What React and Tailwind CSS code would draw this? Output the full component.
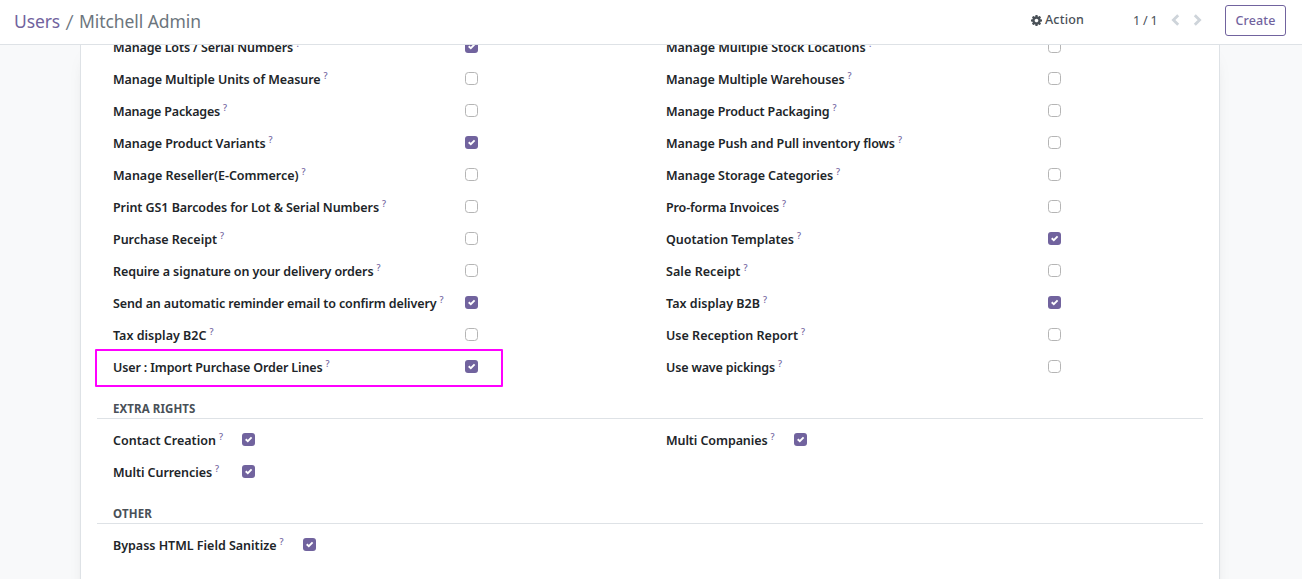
import { useLayoutEffect, useRef } from "react";

const leftColumn = [
  ["Manage Lots / Serial Numbers", 180, true],
  ["Manage Multiple Units of Measure", 207.5, false],
  ["Manage Packages", 107, false],
  ["Manage Product Variants", 152.5, true],
  ["Manage Reseller(E-Commerce)", 185.5, false],
  ["Print GS1 Barcodes for Lot & Serial Numbers", 266, false],
  ["Purchase Receipt", 104, false],
  ["Require a signature on your delivery orders", 260.5, false],
  ["Send an automatic reminder email to confirm delivery", 323.5, true],
  ["Tax display B2C", 93.5, false],
  ["User : Import Purchase Order Lines", 209.5, true],
];

const rightColumn = [
  ["Manage Multiple Stock Locations", 199.5, false],
  ["Manage Multiple Warehouses", 178.5, false],
  ["Manage Product Packaging", 163.5, false],
  ["Manage Push and Pull inventory flows", 229, false],
  ["Manage Storage Categories", 167, false],
  ["Pro-forma Invoices", 113, false],
  ["Quotation Templates", 128, true],
  ["Sale Receipt", 74.5, false],
  ["Tax display B2B", 94, true],
  ["Use Reception Report", 132, false],
  ["Use wave pickings", 109, false],
];

// Spreads the letters so that the text fills exactly the given width.
function FitText({ text, width }) {
  const ref = useRef(null);
  useLayoutEffect(() => {
    const el = ref.current;
    const fit = () => {
      el.style.letterSpacing = "0px";
      const natural = el.getBoundingClientRect().width;
      el.style.letterSpacing = `${(width - natural) / text.length}px`;
    };
    fit();
    document.fonts?.ready.then(fit);
  }, [text, width]);
  return <span ref={ref} className="inline-block whitespace-pre">{text}</span>;
}

function CogIcon() {
  return (
    <svg viewBox="0 128 1536 1536" className="size-[11px]" fill="currentColor">
      <path d="M1024 896q0-106-75-181t-181-75-181 75-75 181 75 181 181 75 181-75 75-181zm512-109v222q0 12-8 23t-20 13l-185 28q-19 54-39 91 35 50 107 138 10 12 10 25t-9 23q-27 37-99 108t-94 71q-12 0-26-9l-138-108q-44 23-91 38-16 136-29 186-7 28-36 28h-222q-14 0-24.500-8.500t-11.500-21.500l-28-184q-49-16-90-37l-141 107q-10 9-25 9-14 0-25-11-126-114-165-168-7-10-7-23 0-12 8-23 15-21 51-66.500t54-70.500q-27-50-41-99l-183-27q-13-2-21-12.500t-8-23.500v-222q0-12 8-23t19-13l186-28q14-46 39-92-40-57-107-138-10-12-10-24 0-10 9-23 26-36 98.500-107.500t94.500-71.500q13 0 26 10l138 107q44-23 91-38 16-136 29-186 7-28 36-28h222q14 0 24.500 8.500t11.500 21.500l28 184q49 16 90 37l142-107q9-9 24-9 13 0 25 10 129 119 165 170 7 8 7 22 0 12-8 23-15 21-51 66.500t-54 70.500q26 50 41 98l183 28q13 2 21 12.500t8 23.500z" />
    </svg>
  );
}

function Label({ text, width }) {
  return (
    <div className="flex h-5 items-start font-semibold text-[#212529]">
      <span className="text-[12.5px] leading-5"><FitText text={text} width={width} /></span>
      <span className="ml-[3px] text-[9px] leading-[12px] font-medium text-[#71639e]">?</span>
    </div>
  );
}

function Checkbox({ checked }) {
  if (!checked) {
    return <span className="mt-0.5 block size-[13px] shrink-0 rounded-[3.5px] border border-[#b5b5b5] bg-white" />;
  }
  return (
    <span className="mt-0.5 block size-[13px] shrink-0 rounded-[3px] bg-[#71639e]">
      <svg viewBox="0 0 13 13" className="block size-[13px]" fill="none" stroke="white" strokeWidth="1.9">
        <path d="M3.7 6.3 5.8 8.2 9.6 4.4" />
      </svg>
    </span>
  );
}

function Row({ item, labelClass }) {
  const [text, width, checked] = item;
  return (
    <div className="flex h-8 items-start">
      <div className={labelClass}><Label text={text} width={width} /></div>
      <Checkbox checked={checked} />
    </div>
  );
}

function SectionTitle({ text, width }) {
  return (
    <div className="-mx-4 h-5 border-b border-[#dee2e6] pl-4 text-[11.5px] leading-[19px] font-bold text-[#495057]">
      <FitText text={text} width={width} />
    </div>
  );
}

export default function App() {
  return (
    <div className="flex h-[579px] w-[1302px] flex-col overflow-hidden bg-[#f8f9fa] font-['Noto_Sans',sans-serif]">
      <header className="flex h-[45px] shrink-0 items-start border-b border-[#dee2e6] bg-white">
        <nav className="flex flex-1 pt-[9px] pl-[14px] text-[17.5px] leading-6 text-[#6c757d]">
          <span className="w-[51px] text-[#71639e]"><FitText text="Users" width={46} /></span>
          <span className="w-[14px] font-[Lato,sans-serif] text-[20px]">/</span>
          <FitText text="Mitchell Admin" width={122} />
        </nav>
        <button className="mt-[10px] flex h-5 w-[102px] items-center gap-[3px] text-[12.5px] font-medium text-[#495057]">
          <CogIcon />
          <span className="pt-px"><FitText text="Action" width={39} /></span>
        </button>
        <span className="mt-[11px] w-[38px] text-[12.5px] leading-5 text-[#495057]"><FitText text="1 / 1" width={24.5} /></span>
        <span className="mt-[14px] flex h-3 w-[54px] gap-[13px]">
          <svg viewBox="0 0 9 12" className="h-3 w-[9px]" fill="none" stroke="#ced4da" strokeWidth="2.8">
            <path d="M7.2 1.2 2.4 6l4.8 4.8" />
          </svg>
          <svg viewBox="0 0 9 12" className="h-3 w-[9px]" fill="none" stroke="#ced4da" strokeWidth="2.8">
            <path d="M1.8 1.2 6.6 6l-4.8 4.8" />
          </svg>
        </span>
        <button className="mt-[5px] mr-4 flex h-[31px] w-[61px] items-center justify-center rounded-[3px] border border-[#71639e] pt-px text-[12.5px] font-medium text-[#71639e]">
          <FitText text="Create" width={40} />
        </button>
      </header>
      <main className="flex min-h-0 flex-1 justify-center overflow-hidden pr-[2px]">
        <div className="h-[600px] w-[1140px] shrink-0 border-x border-[#dee2e6] bg-white px-8 shadow-[0_5px_20px_-15px_rgba(0,0,0,0.4)]">
          <div className="-mt-[7px] grid h-[361px] grid-cols-[553px_1fr]">
            <div>
              {leftColumn.map((item) => <Row key={item[0]} item={item} labelClass="w-[352px]" />)}
              <div className="relative">
                <div className="absolute -top-[41px] -left-[18px] h-[38px] w-[408px] rounded-[1px] border-2 border-[#ff00ff]" />
              </div>
            </div>
            <div>
              {rightColumn.map((item) => <Row key={item[0]} item={item} labelClass="w-[382px]" />)}
            </div>
          </div>
          <SectionTitle text="EXTRA RIGHTS" width={82.5} />
          <div className="mt-3 grid grid-cols-[553px_1fr]">
            <div>
              <Row item={["Contact Creation", 103, true]} labelClass="w-[129px]" />
              <Row item={["Multi Currencies", 99, true]} labelClass="w-[129px]" />
            </div>
            <Row item={["Multi Companies", 101.5, true]} labelClass="w-[128px]" />
          </div>
          <div className="mt-[9px]"><SectionTitle text="OTHER" width={39} /></div>
          <div className="mt-3"><Row item={["Bypass HTML Field Sanitize", 163.5, true]} labelClass="w-[190px]" /></div>
        </div>
      </main>
    </div>
  );
}
